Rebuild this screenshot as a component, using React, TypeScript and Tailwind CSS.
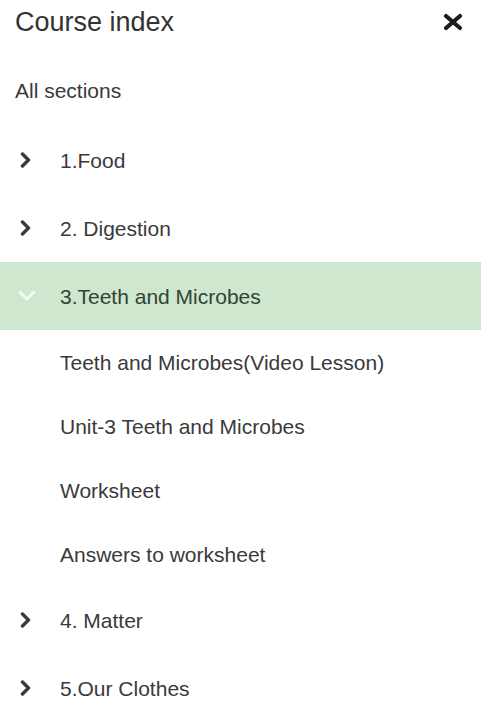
import React from "react";

const sections = [
  { title: "1.Food" },
  { title: "2. Digestion" },
  {
    title: "3.Teeth and Microbes",
    open: true,
    items: [
      "Teeth and Microbes(Video Lesson)",
      "Unit-3 Teeth and Microbes",
      "Worksheet",
      "Answers to worksheet",
    ],
  },
  { title: "4. Matter" },
  { title: "5.Our Clothes" },
];

function ChevronRight() {
  return (
    <svg width="12" height="16" viewBox="0 0 12 16" fill="none">
      <polyline
        points="2.5,2 8.5,8 2.5,14"
        stroke="#3a3a3a"
        strokeWidth="3.4"
        strokeLinecap="round"
        strokeLinejoin="round"
      />
    </svg>
  );
}

function ChevronDown() {
  return (
    <svg width="22" height="14" viewBox="0 0 22 14" fill="none">
      <polyline
        points="4,3 11,10 18,3"
        stroke="#f4faf3"
        strokeWidth="3"
        strokeLinecap="round"
        strokeLinejoin="round"
      />
    </svg>
  );
}

export default function App() {
  return (
    <div
      className="w-[481px] h-[720px] overflow-hidden bg-white text-[#3a3a3a]"
      style={{ fontFamily: '"Liberation Sans", Arial, sans-serif' }}
    >
      <div className="flex h-[44px] items-center justify-between pl-[15px] pr-[17px]">
        <h2 className="text-[27px] leading-none text-[#333]">Course index</h2>
        <svg width="22" height="18" viewBox="0 0 22 18" fill="none">
          <path
            d="M4 3 L18 15 M18 3 L4 15"
            stroke="#1c1c1c"
            strokeWidth="4.2"
            strokeLinecap="round"
          />
        </svg>
      </div>
      <div className="flex h-[82px] items-center pl-[15px] pt-[10px] text-[21px] leading-none">
        All sections
      </div>
      <div className="flex flex-col">
        {sections.map((s) => (
          <div key={s.title}>
            <div
              className={
                s.open
                  ? "flex h-[68px] items-center bg-[#cfe6cf] text-[#2f4436]"
                  : "flex h-[68px] items-center"
              }
            >
              <div className="flex w-[60px] justify-start">
                {s.open ? (
                  <span className="ml-[16px] flex">
                    <ChevronDown />
                  </span>
                ) : (
                  <span className="ml-[20px] flex">
                    <ChevronRight />
                  </span>
                )}
              </div>
              <span className="text-[21px] leading-none">{s.title}</span>
            </div>
            {s.items?.map((it) => (
              <div
                key={it}
                className="flex h-[64px] items-center pl-[60px] text-[21px] leading-none"
              >
                {it}
              </div>
            ))}
          </div>
        ))}
      </div>
    </div>
  );
}
